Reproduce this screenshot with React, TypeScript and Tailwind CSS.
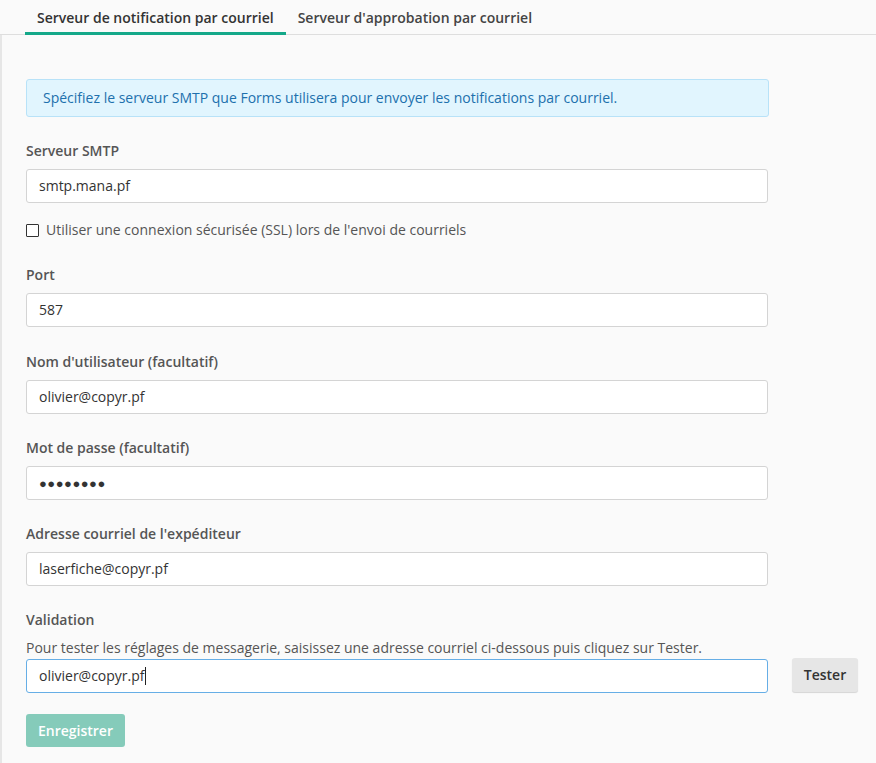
const font = { fontFamily: '"Open Sans", "Liberation Sans", sans-serif' }

function Field({ label, value, className, children }: { label: string; value?: string; className?: string; children?: React.ReactNode }) {
  return (
    <div className={className ?? 'mb-6'}>
      <div className="h-5 leading-5 text-sm font-semibold text-[#555] mb-2">{label}</div>
      <div className="w-[742px] h-[34px] bg-white border border-[#d4d4d4] rounded-[3px] px-3 flex items-center text-sm text-[#333]">
        {children ?? value}
      </div>
    </div>
  )
}

export default function App() {
  return (
    <div className="min-h-[763px] bg-[#fafafa] text-sm" style={font}>
      <div className="flex h-[35px] border-b border-[#dedede] pl-[25px]">
        <div className="px-3 h-[35px] flex items-center font-semibold text-[#333] border-b-[3px] border-[#14a889] pt-[4px]">
          Serveur de notification par courriel
        </div>
        <div className="px-3 h-[35px] flex items-center font-semibold text-[#444] pt-[1px]">
          Serveur d'approbation par courriel
        </div>
      </div>

      <div className="border-l-2 border-[#e6e6e6] pl-6 pt-11 pb-4 min-h-[728px]">
        <div className="w-[743px] h-[38px] bg-[#e1f5fe] border border-[#b8e2f8] rounded-[3px] px-4 flex items-center text-[#2070ad] mb-6">
          Spécifiez le serveur SMTP que Forms utilisera pour envoyer les notifications par courriel.
        </div>

        <div>
          <div className="h-5 leading-5 text-sm font-semibold text-[#555] mb-2">Serveur SMTP</div>
          <div className="w-[742px] h-[34px] bg-white border border-[#d4d4d4] rounded-[3px] px-3 flex items-center text-[#333]">
            smtp.mana.pf
          </div>
        </div>

        <div className="flex items-center gap-[7px] h-5 mt-[17px] mb-[25px] text-[#555]">
          <div className="w-[13px] h-[13px] border border-[#333] bg-white rounded-[1px]" />
          <span>Utiliser une connexion sécurisée (SSL) lors de l'envoi de courriels</span>
        </div>

        <Field label="Port" value="587" className="mb-[25px]" />
        <Field label="Nom d'utilisateur (facultatif)" value="olivier@copyr.pf" />
        <Field label="Mot de passe (facultatif)">
          <span className="text-[13px] tracking-[0.5px] text-[#333]">●●●●●●●●</span>
        </Field>
        <Field label="Adresse courriel de l'expéditeur" value="laserfiche@copyr.pf" />

        <div>
          <div className="h-5 leading-5 font-semibold text-[#555] mb-2">Validation</div>
          <div className="h-5 leading-5 text-[#555] mb-[1px]">
            Pour tester les réglages de messagerie, saisissez une adresse courriel ci-dessous puis cliquez sur Tester.
          </div>
          <div className="flex items-start gap-6">
            <div className="w-[742px] h-[34px] bg-white border border-[#66aee6] rounded-[3px] px-3 flex items-center text-[#333]">
              olivier@copyr.pf
              <span className="inline-block w-px h-[18px] bg-[#222]" />
            </div>
            <button className="-mt-px w-[66px] h-[34px] bg-[#e6e6e6] rounded-[3px] font-semibold text-[#333] shadow-[0_1px_1px_rgba(0,0,0,0.15)]">
              Tester
            </button>
          </div>
        </div>

        <button className="mt-[21px] w-[99px] h-[33px] bg-[#85cbba] rounded-[3px] font-semibold text-white">
          Enregistrer
        </button>
      </div>
    </div>
  )
}
